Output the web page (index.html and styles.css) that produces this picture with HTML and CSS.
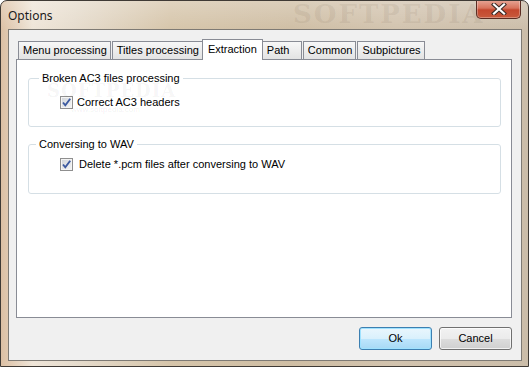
FILE: index.html
```html
<!DOCTYPE html>
<html lang="en">
<head>
    <meta charset="UTF-8">
    <title>Options</title>
    <link rel="stylesheet" href="styles.css">
</head>
<body>
    <div class="window">
        <div class="titlebar">
            <span class="title">Options</span>
            <span class="title-mark">SOFTPEDIA</span>
            <div class="close-btn">
                <svg width="16" height="12" viewBox="0 0 16 12">
                    <path d="M3 1.5 L13 10.5 M13 1.5 L3 10.5" stroke="#3a2a26" stroke-width="4.2" stroke-linecap="square"/>
                    <path d="M3 1.5 L13 10.5 M13 1.5 L3 10.5" stroke="#ffffff" stroke-width="2.2" stroke-linecap="square"/>
                </svg>
            </div>
        </div>
        <div class="client">
            <div class="tabs">
                <div class="tab">Menu processing</div>
                <div class="tab">Titles processing</div>
                <div class="tab active">Extraction</div>
                <div class="tab">Path</div>
                <div class="tab">Common</div>
                <div class="tab">Subpictures</div>
            </div>
            <div class="panel">
                <span class="panel-mark">SOFTPEDIA</span>
                <span class="panel-url">www.softpedia.com</span>
                <fieldset class="group group-ac3">
                    <legend>Broken AC3 files processing</legend>
                    <label class="check">
                        <span class="box">
                            <svg width="11" height="11" viewBox="0 0 11 11">
                                <path d="M2 5.5 L4.3 8.3 L9.2 1.8" fill="none" stroke="#3c5aa0" stroke-width="1.9"/>
                            </svg>
                        </span>
                        Correct AC3 headers
                    </label>
                </fieldset>
                <fieldset class="group group-wav">
                    <legend>Conversing to WAV</legend>
                    <label class="check">
                        <span class="box">
                            <svg width="11" height="11" viewBox="0 0 11 11">
                                <path d="M2 5.5 L4.3 8.3 L9.2 1.8" fill="none" stroke="#3c5aa0" stroke-width="1.9"/>
                            </svg>
                        </span>
                        Delete *.pcm files after conversing to WAV
                    </label>
                </fieldset>
            </div>
            <div class="buttons">
                <div class="btn btn-default">Ok</div>
                <div class="btn">Cancel</div>
            </div>
        </div>
    </div>
</body>
</html>
```

FILE: styles.css
```css
html, body {
    margin: 0;
    padding: 0;
}
body {
    font-family: "Liberation Sans", Arial, sans-serif;
    font-size: 11px;
    color: #000;
    background: #fff;
}
.window {
    width: 529px;
    height: 367px;
    box-sizing: border-box;
    border: 1px solid #3f3a35;
    border-radius: 7px 7px 0 0;
    padding: 0 6px 5px 7px;
    display: flex;
    flex-direction: column;
    background:
        linear-gradient(to bottom, rgba(255,255,255,0.25), rgba(255,255,255,0) 30px),
        linear-gradient(to right, #dcc0a4 0%, #efe5d8 6%, #e6dccd 14%, #d6c5aa 32%, #cfbea4 55%, #d2c3ae 75%, #cbbda9 100%);
    overflow: hidden;
}
.titlebar {
    height: 28px;
    display: flex;
    position: relative;
}
.title {
    font-family: "Noto Sans", "Open Sans", sans-serif;
    font-size: 12px;
    line-height: 16px;
    margin-top: 7px;
    color: #1a1a1a;
}
.title-mark {
    position: absolute;
    left: 285px;
    top: -2px;
    font-family: "DejaVu Serif", serif;
    font-weight: bold;
    font-size: 26px;
    letter-spacing: 2px;
    color: rgba(110, 90, 70, 0.11);
}
.close-btn {
    margin-left: auto;
    margin-top: -1px;
    margin-right: 1px;
    width: 45px;
    height: 19px;
    box-sizing: border-box;
    border: 1px solid #5b2c22;
    border-top: none;
    border-radius: 0 0 5px 5px;
    background: linear-gradient(to bottom, #e8a898 0%, #d8735c 45%, #c4472e 55%, #c85a3c 100%);
    box-shadow: inset 0 0 0 1px rgba(255,255,255,0.3);
    display: flex;
    justify-content: center;
    align-items: center;
}
.client {
    flex: 1;
    background: #f0f0f0;
    border: 1px solid #7e7a74;
    padding: 9px 9px 10px 7px;
    display: flex;
    flex-direction: column;
}
.tabs {
    display: flex;
    align-items: flex-end;
    height: 20px;
    padding-left: 2px;
}
.tab {
    height: 18px;
    min-width: 40px;
    box-sizing: border-box;
    border: 1px solid #898c95;
    border-bottom: none;
    padding: 0 3px 0 4px;
    margin-right: 1px;
    line-height: 17px;
    background: linear-gradient(to bottom, #f7f7f7, #e3e3e3);
    white-space: nowrap;
}
.tab.active {
    height: 21px;
    margin: 0 -1px -1px -2px;
    padding: 0 5px;
    line-height: 18px;
    background: #fff;
    position: relative;
    z-index: 1;
}
.panel {
    flex: 1;
    background: #fff;
    border: 1px solid #898c95;
    position: relative;
    width: 494px;
}
.panel-mark {
    position: absolute;
    left: 30px;
    top: 20px;
    font-family: "DejaVu Serif", serif;
    font-weight: bold;
    font-size: 18px;
    letter-spacing: 1px;
    color: rgba(0, 0, 0, 0.05);
}
.panel-url {
    position: absolute;
    left: 54px;
    top: 45px;
    font-size: 8px;
    color: rgba(0, 0, 0, 0.07);
}
.group {
    border: 1px solid #d5dfe5;
    border-radius: 3px;
    padding: 0;
    min-width: 0;
    margin: 12px 10px 0 11px;
}
.group legend {
    padding: 0 3px;
    line-height: 13px;
}
.group-ac3 legend {
    margin-left: 10px;
}
.group-wav {
    margin-top: 11px;
}
.group-wav legend {
    margin-left: 7px;
}
.check {
    display: flex;
    align-items: center;
    height: 13px;
    line-height: 13px;
    margin-left: 31px;
}
.group-ac3 .check {
    margin-top: 11px;
    margin-bottom: 17px;
    gap: 4px;
}
.group-wav .check {
    margin-top: 7px;
    margin-bottom: 22px;
    gap: 6px;
}
.box {
    width: 13px;
    height: 13px;
    box-sizing: border-box;
    border: 1px solid #8f8f8f;
    background: linear-gradient(135deg, #cfd3d8, #f6f6f6);
    box-shadow: inset 0 0 0 1px #f4f4f4;
    display: flex;
    justify-content: center;
    align-items: center;
}
.buttons {
    display: flex;
    justify-content: flex-end;
    gap: 7px;
    margin-top: 9px;
}
.btn {
    width: 73px;
    height: 23px;
    box-sizing: border-box;
    border: 1px solid #707070;
    border-radius: 3px;
    text-align: center;
    line-height: 21px;
    background: linear-gradient(to bottom, #f2f2f2 0%, #ebebeb 50%, #dddddd 51%, #cfcfcf 100%);
    box-shadow: inset 0 0 0 1px rgba(255,255,255,0.7);
}
.btn-default {
    border-color: #3c7fb1;
    background: linear-gradient(to bottom, #eaf6fd 0%, #d9f0fc 50%, #bee6fd 51%, #a7d9f5 100%);
    box-shadow: inset 0 0 0 1px #9fe2ff;
}
```
